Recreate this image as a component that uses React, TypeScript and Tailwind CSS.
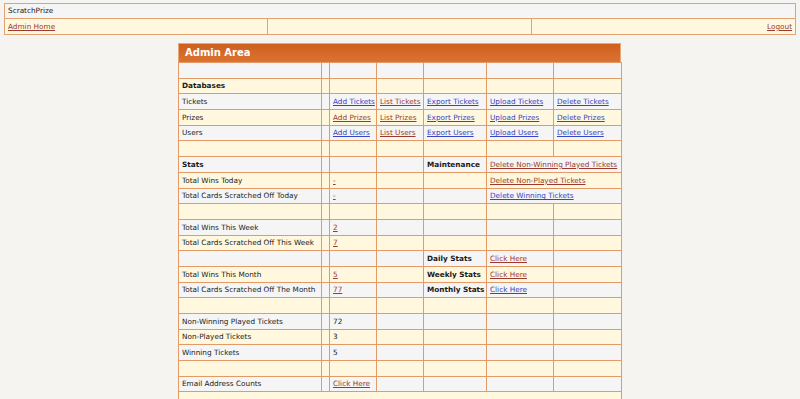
import React from 'react';

type Link = { text: string; c: 'r' | 'b' };
type Cell = string | Link | { bold: string } | null;

const R = (text: string): Link => ({ text, c: 'r' });
const B = (text: string): Link => ({ text, c: 'b' });

// each row: 7 cells (label, spacer, c3..c7). 'span' on c6 merges c6+c7
const rows: { cells: Cell[]; span?: boolean }[] = [
  { cells: [null, null, null, null, null, null, null] },
  { cells: [{ bold: 'Databases' }, null, null, null, null, null, null] },
  { cells: ['Tickets', null, B('Add Tickets'), R('List Tickets'), B('Export Tickets'), B('Upload Tickets'), B('Delete Tickets')] },
  { cells: ['Prizes', null, R('Add Prizes'), R('List Prizes'), B('Export Prizes'), B('Upload Prizes'), B('Delete Prizes')] },
  { cells: ['Users', null, B('Add Users'), R('List Users'), B('Export Users'), B('Upload Users'), B('Delete Users')] },
  { cells: [null, null, null, null, null, null, null] },
  { cells: [{ bold: 'Stats' }, null, null, null, { bold: 'Maintenance' }, R('Delete Non-Winning Played Tickets')], span: true },
  { cells: ['Total Wins Today', null, R('-'), null, null, R('Delete Non-Played Tickets')], span: true },
  { cells: ['Total Cards Scratched Off Today', null, R('-'), null, null, B('Delete Winning Tickets')], span: true },
  { cells: [null, null, null, null, null, null, null] },
  { cells: ['Total Wins This Week', null, R('2'), null, null, null, null] },
  { cells: ['Total Cards Scratched Off This Week', null, R('7'), null, null, null, null] },
  { cells: [null, null, null, null, { bold: 'Daily Stats' }, R('Click Here'), null] },
  { cells: ['Total Wins This Month', null, R('5'), null, { bold: 'Weekly Stats' }, R('Click Here'), null] },
  { cells: ['Total Cards Scratched Off The Month', null, R('77'), null, { bold: 'Monthly Stats' }, B('Click Here'), null] },
  { cells: [null, null, null, null, null, null, null] },
  { cells: ['Non-Winning Played Tickets', null, '72', null, null, null, null] },
  { cells: ['Non-Played Tickets', null, '3', null, null, null, null] },
  { cells: ['Winning Tickets', null, '5', null, null, null, null] },
  { cells: [null, null, null, null, null, null, null] },
  { cells: ['Email Address Counts', null, R('Click Here'), null, null, null, null] },
];

const widths = ['w-[143px]', 'w-[8px]', 'w-[47px]', 'w-[47px]', 'w-[63px]', 'w-[67px]', 'w-[68px]'];

function renderCell(c: Cell) {
  if (c === null) return null;
  if (typeof c === 'string') return <span>{c}</span>;
  if ('bold' in c) return <span className="font-bold">{c.bold}</span>;
  return (
    <a href="#" className={`underline ${c.c === 'r' ? 'text-[#9c3a2c]' : 'text-[#3645c4]'}`}>
      {c.text}
    </a>
  );
}

export default function App() {
  return (
    <div className="min-h-screen bg-[#f6f4f0] pt-[3px] text-[7.3px] text-[#1a1a1a] font-['DejaVu_Sans',sans-serif] leading-none">
      <div className="mx-[4px] border border-[#e3a272]">
        <div className="h-[15px] bg-[#f5f5f5] border-b border-[#e3a272] flex items-center px-[3px]">ScratchPrize</div>
        <div className="h-[15px] bg-[#fff8de] grid grid-cols-3">
          <div className="flex items-center px-[3px] border-r border-[#e3a272]">
            <a href="#" className="underline text-[#9c3a2c]">Admin Home</a>
          </div>
          <div className="border-r border-[#e3a272]" />
          <div className="flex items-center justify-end px-[3px]">
            <a href="#" className="underline text-[#9c3a2c]">Logout</a>
          </div>
        </div>
      </div>

      <div className="w-[443px] ml-[178px] mt-[8px]">
        <div className="h-[19px] border border-b-0 border-[#e6a77a] bg-gradient-to-b from-[#cf5f1c] to-[#db7332] text-white font-bold text-[10px] flex items-center px-[6px]">
          Admin Area
        </div>
        <table className="w-full border-collapse table-fixed">
          <colgroup>
            {widths.map((w, i) => (
              <col key={i} className={w} />
            ))}
          </colgroup>
          <tbody>
            {rows.map((r, ri) => (
              <tr key={ri} className={`h-[15.7px] ${ri % 2 === 0 ? 'bg-[#f5f5f5]' : 'bg-[#fff8de]'}`}>
                {r.cells.map((c, ci) => (
                  <td
                    key={ci}
                    colSpan={r.span && ci === 5 ? 2 : 1}
                    className="border border-[#e39a66] whitespace-nowrap overflow-visible p-0 pl-[3px] align-middle"
                  >
                    {renderCell(c)}
                  </td>
                ))}
              </tr>
            ))}
            <tr className="h-[15.7px] bg-[#fff8de]">
              <td colSpan={7} className="border border-[#e39a66]" />
            </tr>
          </tbody>
        </table>
      </div>
    </div>
  );
}
